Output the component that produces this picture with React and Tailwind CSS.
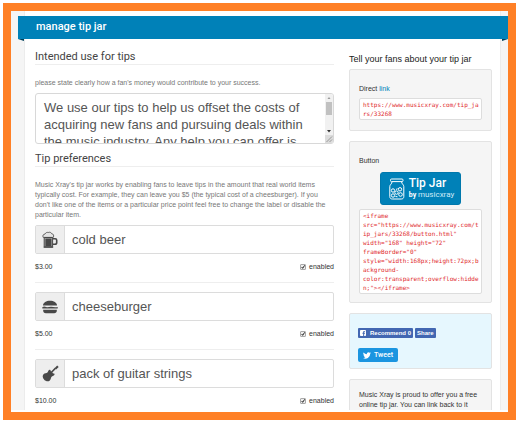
import React, { useState } from 'react';

const TIPS = [
  { id: 'beer', label: 'cold beer', price: '$3.00', Icon: BeerIcon },
  { id: 'burger', label: 'cheeseburger', price: '$5.00', Icon: BurgerIcon },
  { id: 'guitar', label: 'pack of guitar strings', price: '$10.00', Icon: GuitarIcon },
];

const USAGE =
  'We use our tips to help us offset the costs of acquiring new fans and pursuing deals within the music industry. Any help you can offer is greatly appreciated.';

const LINK = `https://www.musicxray.com/tip_ja
rs/33268`;

const EMBED = `<iframe
src="https://www.musicxray.com/t
ip_jars/33268/button.html"
width="168" height="72"
frameBorder="0"
style="width:168px;height:72px;b
ackground-
color:transparent;overflow:hidde
n;"></iframe>`;

function BeerIcon() {
  return (
    <svg viewBox="0 0 16 18" className="w-4 h-[18px]" fill="none" stroke="#484848">
      <path d="M1.2 6.4C.2 4.6 1.4 3 3 3.1 3.6 1.6 5 1.1 6.2 1.5 7.6.8 9.3 1.4 9.8 2.8c1.5 0 2.5 1.7 1.5 3.6z" fill="#e4e4e4" strokeWidth=".8" />
      <path d="M2.2 6.5h8.4v9.3H2.2z" fill="#aaa" strokeWidth="1" />
      <path d="M3.4 7.6h6v7.6h-6z" fill="#484848" stroke="none" />
      <path d="M1.6 16.2h9.6" strokeWidth="1.2" />
      <path d="M11 7.8h2.2c1 0 1.5.5 1.5 1.5v2.2c0 1.2-.8 1.8-1.8 1.8H11" strokeWidth="1.6" />
    </svg>
  );
}

function BurgerIcon() {
  return (
    <svg viewBox="0 0 16 14" className="w-4 h-[14px]" fill="#484848">
      <path d="M1 5.4C1.2 2.6 4.2.8 8 .8s6.8 1.8 7 4.6z" />
      <path d="M.3 7.3c1.5-1.2 2.5-.8 4-.2 1.8.6 3.2-.6 5-.4 1.8.2 3.5.9 6.4.2v1.5H.3z" />
      <path d="M1.2 9.7h13.6v1c0 1.5-1 2.5-2.6 2.5H3.8c-1.600 0-2.600-1-2.600-2.500z" />
    </svg>
  );
}

function GuitarIcon() {
  return (
    <svg viewBox="0 0 17 17" className="w-[17px] h-[17px]" fill="#484848">
      <path d="M1.5 9.3c1.2-1.2 3-1 3.9-1.8.8-.8.6-2 1.7-2.6.9-.5 1.6-.1 1.5.6-.1.5.3 1 .9 1.2l.8.9c.3.7.9 1 1.5.9.7 0 1 .7.5 1.500-.7 1-1.900.9-2.700 1.700-.8.800-.6 2.500-1.800 3.700-1.400 1.400-3.900 1.100-5.600-.6s-2-4.200-.7-5.500z" />
      <path d="M8.2 8.6l5.2-5.3" stroke="#484848" strokeWidth="1.6" />
      <path d="M12.5 3.2l2.7-2.6 1.5 1.3-2.6 2.7z" />
    </svg>
  );
}

function JarIcon() {
  return (
    <svg viewBox="0 0 16 22" className="w-4 h-[22px] shrink-0" fill="none" stroke="#fff">
      <rect x="1.5" y="1" width="12.5" height="2.6" rx="1" />
      <path d="M3 3.8C3 6 .8 6.5.8 8.5v10c0 1.7 1 2.5 2.5 2.5h9c1.5 0 2.5-.8 2.5-2.5v-10c0-2-2.2-2.5-2.2-4.7" />
      <circle cx="4" cy="12.5" r="1.7" />
      <circle cx="11" cy="11.3" r="1.7" />
      <circle cx="7.5" cy="14.6" r="1.7" />
      <circle cx="4" cy="17.5" r="1.7" />
      <circle cx="11.5" cy="16.5" r="1.8" />
      <path d="M6.5 18.5l2 .3M7 11.5l1.5-.8" />
    </svg>
  );
}

function FacebookIcon() {
  return (
    <svg viewBox="0 0 12 12" className="w-[6px] h-[6px]">
      <rect width="12" height="12" rx="1.5" fill="#fff" />
      <path d="M8.3 12V7.6h1.5l.3-1.9H8.3V4.6c0-.6.2-.9.9-.9h1V2.1C8 1.7 6.3 2.1 6.3 4.3v1.4H4.9v1.9h1.4V12z" fill="#4267b2" />
    </svg>
  );
}

function TwitterIcon() {
  return (
    <svg viewBox="0 0 24 20" className="w-2 h-[7px]" fill="#fff">
      <path d="M24 2.4a10 10 0 0 1-2.8.8A5 5 0 0 0 23.3.5a10 10 0 0 1-3.1 1.2A4.9 4.9 0 0 0 11.8 6.2 14 14 0 0 1 1.7 1a4.900 4.900 0 0 0 1.500 6.600A5 5 0 0 1 1 7a4.900 4.900 0 0 0 3.900 4.900 5 5 0 0 1-2.200.1 4.900 4.900 0 0 0 4.600 3.400A9.900 9.900 0 0 1 0 17.500 14 14 0 0 0 21.500 5.100 10 10 0 0 0 24 2.400z" />
    </svg>
  );
}

function SectionTitle({ children }) {
  return (
    <h2 className="font-[Roboto,sans-serif] text-[11px] leading-[14px] text-[#444] border-b border-[#eee]">
      {children}
    </h2>
  );
}

function UsageBox() {
  const [text, setText] = useState(USAGE);
  return (
    <div className="relative h-[51px] mt-[5px] rounded-[3px] border border-[#d8d8d8] overflow-hidden">
      <textarea
        id="usage"
        value={text}
        onChange={(e) => setText(e.target.value)}
        className="block w-full h-full pl-2 pr-[26px] pt-[5px] resize-none overflow-hidden outline-none
                   text-[13px] leading-[17px] text-[#555]"
      />
      <div className="absolute right-0 inset-y-0 w-2 bg-[#f1f1f1] flex flex-col items-center">
        <svg viewBox="0 0 8 8" className="w-2 h-2"><path d="M2.5 5L4 3l1.5 2z" fill="#999" /></svg>
        <span className="w-[6px] h-[13px] bg-[#c1c1c1]" />
        <svg viewBox="0 0 8 8" className="w-2 h-2 mt-auto"><path d="M2 3l2 2.5L6 3z" fill="#333" /></svg>
        <svg viewBox="0 0 8 8" className="w-2 h-2 bg-[#dcdcdc]">
          <path d="M1.5 7L7 1.5M4.5 7L7 4.5" stroke="#888" strokeWidth=".8" />
        </svg>
      </div>
    </div>
  );
}

function TipRow({ tip, last }) {
  const { id, price, Icon } = tip;
  const [label, setLabel] = useState(tip.label);
  const [enabled, setEnabled] = useState(true);

  return (
    <div className={last ? '' : 'border-b border-[#eee] mb-[9px]'}>
      <div className="flex h-[29px] border border-[#dcdcdc] rounded-[2px]">
        <span className="w-[29px] flex items-center justify-center bg-[#eee] border-r border-[#dcdcdc]">
          <Icon />
        </span>
        <input
          aria-label={`${id} label`}
          value={label}
          onChange={(e) => setLabel(e.target.value)}
          className="flex-1 min-w-0 px-[7px] text-[13px] text-[#555] outline-none"
        />
      </div>
      <div className="flex items-center justify-between pt-2 pb-[10px] text-[7px] leading-[10px] text-[#333]">
        <span>{price}</span>
        <label className="relative flex items-center gap-[3px]">
          <input
            type="checkbox"
            checked={enabled}
            onChange={(e) => setEnabled(e.target.checked)}
            className="peer sr-only"
          />
          <svg viewBox="0 0 6 6" className="w-[6px] h-[6px] rounded-[1px] bg-[#eee] border border-[#aaa] text-transparent peer-checked:text-[#222]">
            <path d="M1 3l1.5 2L5.5.5" fill="none" stroke="currentColor" strokeWidth="1.5" />
          </svg>
          enabled
        </label>
      </div>
    </div>
  );
}

function Well({ className = '', children }) {
  return (
    <section className={`border border-[#e3e3e3] rounded-[2px] text-[7px] leading-[10px] text-[#333] ${className}`}>
      {children}
    </section>
  );
}

function Code({ children }) {
  return (
    <pre className="px-[3px] py-px bg-white border border-[#ddd] rounded-[2px]
                    font-['DejaVu_Sans_Mono',monospace] text-[6px] leading-[9px] text-[#e01f2b]">
      {children}
    </pre>
  );
}

function ShareSidebar() {
  return (
    <aside className="w-[143px] shrink-0 flex flex-col gap-[10px] pt-[2px]">
      <div>
        <h2 className="text-[9px] leading-[12px] text-[#222] pt-px pb-1">Tell your fans about your tip jar</h2>
        <Well className="bg-[#f5f5f5] px-[9px] pt-[14px] pb-[10px]">
          <p className="pb-1">
            Direct <a href="#link" className="text-[#0081b8]">link</a>
          </p>
          <Code>{LINK}</Code>
        </Well>
      </div>

      <Well className="bg-[#f5f5f5] px-[9px] pt-[14px] pb-2">
        <p>Button</p>
        <button className="flex items-center gap-1 mx-auto mt-[6px] mb-1 h-[33px] pl-2 pr-[6px] rounded-[3px]
                           bg-[#0081b8] border border-[#0078ac] text-white text-left font-[Roboto,sans-serif]">
          <JarIcon />
          <span>
            <span className="block text-[12px] leading-[13px] font-medium">Tip Jar</span>
            <span className="block text-[7px] leading-[9px]">
              <b>by</b> <span className="text-[8px] text-[#cfeaf7]">musicxray</span>
            </span>
          </span>
        </button>
        <Code>{EMBED}</Code>
      </Well>

      <Well className="bg-[#e6f7fe] px-2 pt-[14px] pb-[6px]">
        <div className="flex gap-[2px] font-bold text-[6px] leading-[10px] text-white">
          <button className="flex items-center gap-1 h-[10px] px-[2px] rounded-[1px] bg-[#4267b2]">
            <FacebookIcon />
            Recommend 0
          </button>
          <button className="h-[10px] px-[2px] rounded-[1px] bg-[#4267b2]">Share</button>
        </div>
        <button className="flex items-center gap-[3px] h-[14px] mt-[10px] px-[5px] rounded-[2px]
                           bg-[#1b95e0] text-white font-medium font-[Roboto,sans-serif]">
          <TwitterIcon />
          Tweet
        </button>
      </Well>

      <Well className="bg-[#f5f5f5] px-[9px] pt-[10px] pb-[10px]">
        <p>Music Xray is proud to offer you a free online tip jar. You can link back to it</p>
      </Well>
    </aside>
  );
}

export default function App() {
  return (
    <div className="h-screen pl-[3px] py-[3px] bg-white font-['Liberation_Sans',Arial,sans-serif]">
      <div className="h-full border-8 border-[#ff8026] overflow-hidden">
        <div className="h-full pb-[2px]">
          <div className="h-full overflow-hidden bg-[#f5f5f5] pl-[13px] pr-[7px]">
            <div className="min-h-full bg-white border-x border-[#ececec] pt-[5px]">
              <header className="relative -ml-[7px] -mr-2 h-[23px] pl-[18px] flex items-center bg-[#0081b8]">
                <h1 className="font-[Roboto,sans-serif] font-medium text-[11px] text-white">manage tip jar</h1>
                <svg viewBox="0 0 6 2" className="absolute left-0 top-full w-[6px] h-[2px]">
                  <path d="M0 0h6v2z" fill="#00415d" />
                </svg>
                <svg viewBox="0 0 6 2" className="absolute right-0 top-full w-[6px] h-[2px]">
                  <path d="M0 0h6L0 2z" fill="#00415d" />
                </svg>
              </header>

              <div className="flex gap-[15px] pl-[10px] pr-[8px] pt-[11px]">
                <main className="flex-1 min-w-0">
                  <SectionTitle>Intended use for tips</SectionTitle>
                  <label htmlFor="usage" className="block pt-[13px] text-[7px] leading-[10px] text-[#777]">
                    please state clearly how a fan's money would contribute to your success.
                  </label>
                  <UsageBox />

                  <div className="pt-2">
                    <SectionTitle>Tip preferences</SectionTitle>
                  </div>
                  <p className="pt-[13px] pb-[5px] text-[7px] leading-[10px] text-[#777]">
                    Music Xray's tip jar works by enabling fans to leave tips in the amount that real world items
                    typically cost. For example, they can leave you $5 (the typical cost of a cheesburger). If you
                    don't like one of the items or a particular price point feel free to change the label or disable the
                    particular item.
                  </p>
                  {TIPS.map((tip, i) => (
                    <TipRow key={tip.id} tip={tip} last={i === TIPS.length - 1} />
                  ))}
                </main>
                <ShareSidebar />
              </div>
            </div>
          </div>
        </div>
      </div>
    </div>
  );
}
